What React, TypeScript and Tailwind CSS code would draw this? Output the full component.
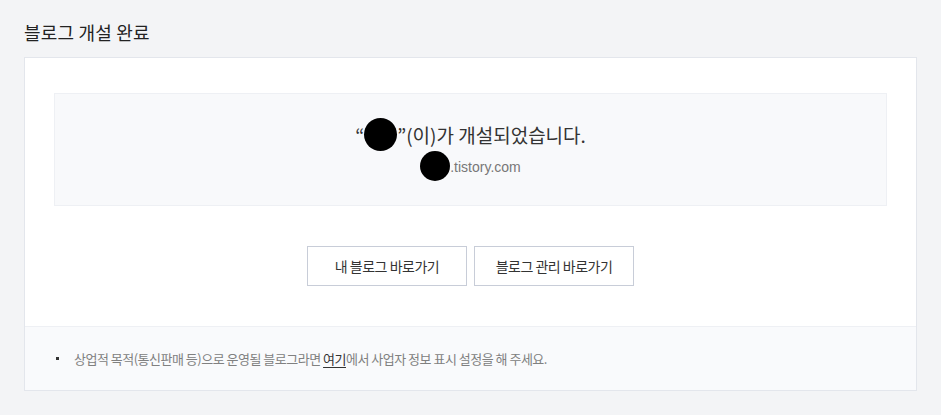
import React from "react";

export default function App() {
  return (
    <div
      className="min-h-[415px] w-full bg-[#f3f4f6] px-6 pt-[19px] pb-6 text-[#222]"
      style={{ fontFamily: '"Noto Sans CJK KR", "Noto Sans", sans-serif' }}
    >
      <h1 className="text-[18px] leading-[26px] font-normal tracking-[0.2px] text-[#222]">블로그 개설 완료</h1>

      <div className="mt-[12px] border border-[#e3e6ec] bg-white">
        <div className="px-[29px] pt-[35px]">
          {/* Result box */}
          <div className="flex h-[113px] flex-col items-center justify-center border border-[#eef0f4] bg-[#f8f9fb]">
            <p className="flex h-[33px] items-center text-[19px] leading-[26px] text-[#333]">
              <span>“</span>
              <span className="inline-block h-[33px] w-[33px] rounded-full bg-black" />
              <span>”(이)가 개설되었습니다.</span>
            </p>
            <p className="flex h-[30px] items-center text-[14px] leading-[20px] text-[#777]">
              <span className="inline-block h-[30px] w-[30px] rounded-full bg-black" />
              <span className="pt-[2px]" style={{ fontFamily: '"Liberation Sans", Arial, sans-serif' }}>.tistory.com</span>
            </p>
          </div>

          {/* Actions */}
          <div className="flex justify-center gap-[7px] pt-[40px] pb-[40px]">
            <button className="h-[40px] w-[160px] border border-[#c8cdd8] bg-white text-[14px] tracking-[-0.5px] text-[#333]">
              내 블로그 바로가기
            </button>
            <button className="h-[40px] w-[160px] border border-[#c8cdd8] bg-white text-[14px] tracking-[-0.5px] text-[#333]">
              블로그 관리 바로가기
            </button>
          </div>
        </div>

        <div className="flex h-[64px] items-center border-t border-[#eef0f4] bg-[#f9fafc] px-[31px]">
          <ul>
            <li className="flex items-center text-[13px] tracking-[-0.5px] text-[#808080]">
              <span className="mr-[15px] inline-block h-[3px] w-[3px] bg-[#333]" />
              상업적 목적(통신판매 등)으로 운영될 블로그라면&nbsp;
              <a className="text-[#333] underline underline-offset-[3px]">여기</a>
              에서 사업자 정보 표시 설정을 해 주세요.
            </li>
          </ul>
        </div>
      </div>
    </div>
  );
}
